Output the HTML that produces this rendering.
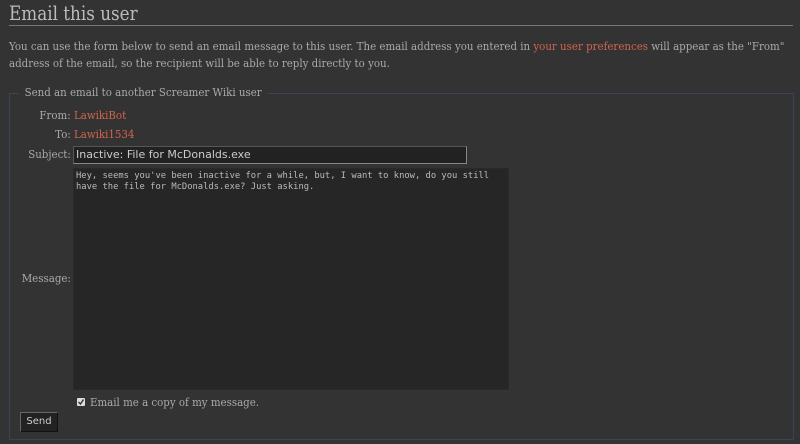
<!DOCTYPE html>
<html><head><style>
body{margin:0;background:#333;color:#aaa;font-family:"DejaVu Serif","Liberation Serif",serif;font-size:11px;width:800px;height:444px;overflow:hidden;position:relative}
.a{position:absolute;white-space:nowrap;transform:scaleX(0.93);transform-origin:left center}
a{color:#d0644e;text-decoration:none}
h1{position:absolute;left:9px;top:0;margin:0;font-weight:normal;font-size:20px;color:#bbb;line-height:26px;transform:scaleX(0.84);transform-origin:left center;white-space:nowrap}
.hr{position:absolute;left:9px;top:25px;width:784px;height:1px;background:#777}
.fs{position:absolute;left:9px;top:93px;width:783px;height:345px;border:1px solid #3a4458}
.lg{background:#333;padding:0 6px;color:#aaa}
.lb{position:absolute;right:729px;text-align:right;white-space:nowrap;transform:scaleX(0.93);transform-origin:right center}
.inp{position:absolute;left:73px;top:146px;width:390px;height:16px;background:#222;border:1px solid #555;border-bottom-color:#888;border-right-color:#888;color:#ccc;font-family:"DejaVu Sans",sans-serif;font-size:11px;line-height:16px;padding-left:2px}
.ta{position:absolute;left:73px;top:168px;width:436px;height:222px;background:#262626;border:1px solid #2a2a2a;color:#bbb;font-family:"DejaVu Sans Mono",monospace;font-size:8.8px;line-height:11px;padding:2px;box-sizing:border-box;white-space:pre}
.btn{position:absolute;left:20px;top:412px;width:36px;height:18px;background:#222;border:1px solid #666;border-right-color:#111;border-bottom-color:#111;color:#ccc;font-family:"DejaVu Sans",sans-serif;font-size:10px;line-height:18px;text-align:center}
.cb{position:absolute;left:77px;top:398px;width:8px;height:8px;background:#ddd;border-radius:1px}
</style></head><body>
<h1>Email this user</h1>
<div class="hr"></div>
<div class="a" style="left:9px;top:38px;line-height:17px">You can use the form below to send an email message to this user. The email address you entered in <a>your user preferences</a> will appear as the "From"<br>address of the email, so the recipient will be able to reply directly to you.</div>
<div class="fs"></div>
<div class="lg a" style="left:19px;top:86px">Send an email to another Screamer Wiki user</div>
<div class="lb" style="top:109px">From:</div><div class="a" style="left:74px;top:109px"><a>LawikiBot</a></div>
<div class="lb" style="top:128px">To:</div><div class="a" style="left:74px;top:128px"><a>Lawiki1534</a></div>
<div class="lb" style="top:148px">Subject:</div>
<div class="inp">Inactive: File for McDonalds.exe</div>
<div class="ta">Hey, seems you've been inactive for a while, but, I want to know, do you still
have the file for McDonalds.exe? Just asking.</div>
<div class="lb" style="top:272px">Message:</div>
<div class="cb"><svg width="8" height="8" style="display:block"><path d="M1.5 4L3.5 6L6.5 1.5" stroke="#333" stroke-width="1.4" fill="none"/></svg></div>
<div class="a" style="left:90px;top:396px">Email me a copy of my message.</div>
<div class="btn">Send</div>
</body></html>
